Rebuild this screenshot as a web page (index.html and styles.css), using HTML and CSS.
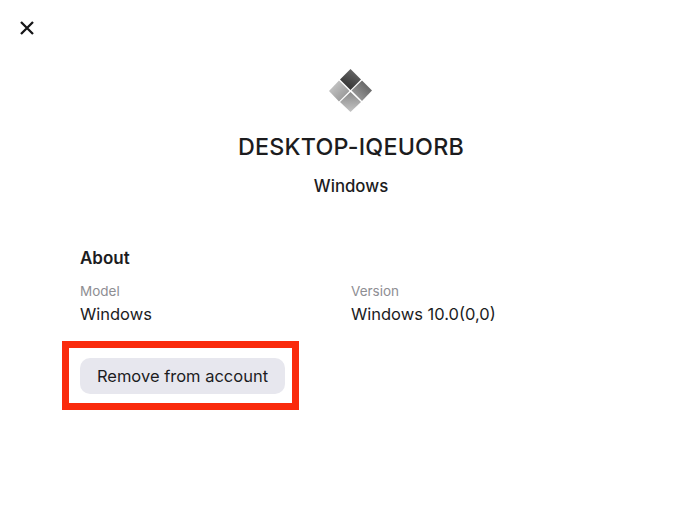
FILE: index.html
```html
<!DOCTYPE html>
<html lang="en">
<head>
<meta charset="utf-8">
<title>DESKTOP-IQEUORB</title>
<link rel="stylesheet" href="styles.css">
</head>
<body>
<main class="page">
  <button class="close" aria-label="Close">
    <svg width="14" height="14" viewBox="0 0 14 14"><path d="M1 1 13 13M13 1 1 13" fill="none" stroke="#161618" stroke-width="2.3"/></svg>
  </button>
  <header class="head">
    <svg class="logo" width="44" height="44" viewBox="0 0 44 44">
      <defs>
        <linearGradient id="a" x1="0.75" y1="0" x2="0.25" y2="1"><stop offset="0" stop-color="#6a6a6a"/><stop offset="1" stop-color="#2e2e2e"/></linearGradient>
        <linearGradient id="b" x1="0" y1="0" x2="1" y2="1"><stop offset="0" stop-color="#d0d0d0"/><stop offset="1" stop-color="#8c8c8c"/></linearGradient>
        <linearGradient id="c" x1="1" y1="0" x2="0" y2="1"><stop offset="0" stop-color="#555"/><stop offset="1" stop-color="#a8a8a8"/></linearGradient>
        <linearGradient id="d" x1="0.5" y1="0" x2="0.5" y2="1"><stop offset="0" stop-color="#8a8a8a"/><stop offset="1" stop-color="#c4c4c4"/></linearGradient>
      </defs>
      <path fill="url(#a)" d="M21.5 1 32 11.5 21.5 22 11 11.5Z"/>
      <path fill="url(#b)" d="M10 12.5 20.5 23 10 33.5 0 23Z"/>
      <path fill="url(#c)" d="M33 12.5 43 22.5 33 33 22.5 22.5Z"/>
      <path fill="url(#d)" d="M21.5 24 32 34 21.5 44 11 34Z"/>
    </svg>
    <h1 class="title">DESKTOP-IQEUORB</h1>
    <p class="subtitle">Windows</p>
  </header>
  <section class="about">
    <h2 class="about-title">About</h2>
    <div class="specs">
      <div>
        <div class="label">Model</div>
        <div class="value">Windows</div>
      </div>
      <div>
        <div class="label">Version</div>
        <div class="value">Windows 10.0(0,0)</div>
      </div>
    </div>
    <div class="highlight">
      <button class="remove">Remove from account</button>
    </div>
  </section>
</main>
</body>
</html>
```
FILE: styles.css
```css
* { box-sizing: border-box; }
html, body { margin: 0; height: 100%; background: #fff; }
body { font-family: Inter, "Liberation Sans", sans-serif; color: #1c1c1e; }
.page { width: 700px; height: 508px; padding: 21px 0 0; overflow: hidden; }
.close { display: block; width: 14px; height: 14px; margin: 0 0 0 20px; padding: 0; border: 0; background: none; }
.close svg { display: block; }
.head { display: flex; flex-direction: column; align-items: center; margin-top: 33px; padding-left: 2px; }
.logo { display: block; }
.title { margin: 21px 0 0; font-size: 23.3px; line-height: 28px; font-weight: 500; letter-spacing: 0.2px; }
.subtitle { margin: 13px 0 0; font-size: 16.8px; line-height: 24px; font-weight: 500; }
.about { margin-top: 49px; padding-left: 80px; }
.about-title { margin: 0; font-size: 17px; line-height: 22px; font-weight: 600; }
.specs { display: grid; grid-template-columns: 271px 271px; margin-top: 13px; }
.label { font-size: 13.5px; line-height: 18px; color: #8e8e93; }
.value { margin-top: 3px; font-size: 16.5px; line-height: 22px; }
.highlight { width: 237px; height: 69px; margin: 16px 0 0 -18px; padding: 10px 11px; border: 7px solid #fa2a0c; }
.remove { display: block; width: 205px; height: 36px; padding: 0; border: 0; border-radius: 10px; background: #e7e7ee; color: #1c1c1e; font: 400 16.5px Inter, "Liberation Sans", sans-serif; }
```
